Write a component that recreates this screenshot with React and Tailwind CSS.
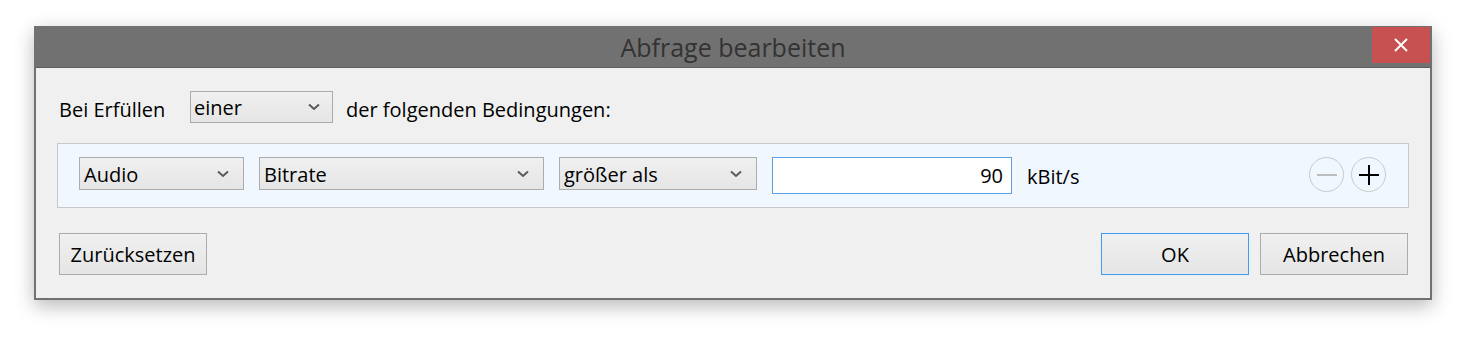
import React from "react";

const Chevron = () => (
  <svg width="12" height="8" viewBox="0 0 12 8" className="shrink-0">
    <path d="M1 1.5 L6 6 L11 1.5" fill="none" stroke="#5a5a5a" strokeWidth="2" />
  </svg>
);

const Select = ({ value, width }) => (
  <div
    className={`${width} h-[33px] flex items-center justify-between pl-[4px] pr-[14px] border border-[#acacac] bg-gradient-to-b from-[#f0f0f0] to-[#e5e5e5] text-black`}
  >
    <span className="leading-none pt-[2px]">{value}</span>
    <Chevron />
  </div>
);

const RoundButton = ({ minus }) => (
  <div className="w-[35px] h-[35px] rounded-full border border-[#cacaca] flex items-center justify-center">
    <svg width="22" height="22" viewBox="0 0 22 22">
      <path d="M1 11 H21" stroke={minus ? "#bdbdbd" : "#000"} strokeWidth="2" />
      {!minus && <path d="M11 1 V21" stroke="#000" strokeWidth="2" />}
    </svg>
  </div>
);

const Button = ({ label, focused }) => (
  <button
    className={`w-[148px] h-[42px] border bg-gradient-to-b from-[#f0f0f0] to-[#e5e5e5] text-black pt-[2px] ${
      focused ? "border-[#3c9bf5]" : "border-[#acacac]"
    }`}
  >
    {label}
  </button>
);

export default function App() {
  return (
    <div
      className="w-[1466px] h-[342px] bg-white pt-[26px] pl-[34px]"
      style={{ fontFamily: '"Open Sans", "Noto Sans", sans-serif' }}
    >
      <div className="w-[1398px] h-[274px] flex flex-col bg-[#717171] px-[2px] pb-[2px] shadow-[0_6px_18px_rgba(0,0,0,0.28)]">
        <div className="h-[42px] flex items-center relative border-b border-[#5c5c5c]">
          <div className="flex-1 text-center text-[25px] text-[#333333] pt-[2px]">Abfrage bearbeiten</div>
          <div className="absolute right-0 top-[1px] w-[58px] h-[36px] bg-[#c75050] flex items-center justify-center">
            <svg width="14" height="14" viewBox="0 0 14 14">
              <path d="M1 1 L13 13 M13 1 L1 13" stroke="#fff" strokeWidth="2" />
            </svg>
          </div>
        </div>
        <div className="flex-1 bg-[#f0f0f0] flex flex-col px-[21px] pt-[23px] text-[20px] text-black">
          <div className="flex items-center h-[32px] pl-[2px]">
            <span className="w-[131px] pt-[6px]">Bei Erfüllen</span>
            <div className="w-[143px] h-[32px] flex items-center justify-between pl-[3px] pr-[12px] border border-[#acacac] bg-gradient-to-b from-[#f0f0f0] to-[#e5e5e5]">
              <span className="leading-none pt-[2px]">einer</span>
              <Chevron />
            </div>
            <span className="ml-[13px] pt-[6px]">der folgenden Bedingungen:</span>
          </div>
          <div className="mt-[20px] h-[65px] border border-[#c9c9c9] bg-[#f0f7fe] flex items-start gap-[15px] pl-[21px] pr-[22px] pt-[13px]">
            <Select value="Audio" width="w-[165px]" />
            <Select value="Bitrate" width="w-[285px]" />
            <Select value="größer als" width="w-[198px]" />
            <div className="w-[240px] h-[37px] border border-[#5aa0e6] bg-white flex items-center justify-end pr-[8px]">
              90
            </div>
            <span className="h-[37px] flex items-center pt-[3px]">kBit/s</span>
            <div className="flex-1" />
            <div className="flex gap-[7px]">
              <RoundButton minus />
              <RoundButton />
            </div>
          </div>
          <div className="mt-[25px] flex items-center pl-[2px] pr-[1px]">
            <Button label="Zurücksetzen" />
            <div className="flex-1" />
            <Button label="OK" focused />
            <div className="w-[11px]" />
            <Button label="Abbrechen" />
          </div>
        </div>
      </div>
    </div>
  );
}
